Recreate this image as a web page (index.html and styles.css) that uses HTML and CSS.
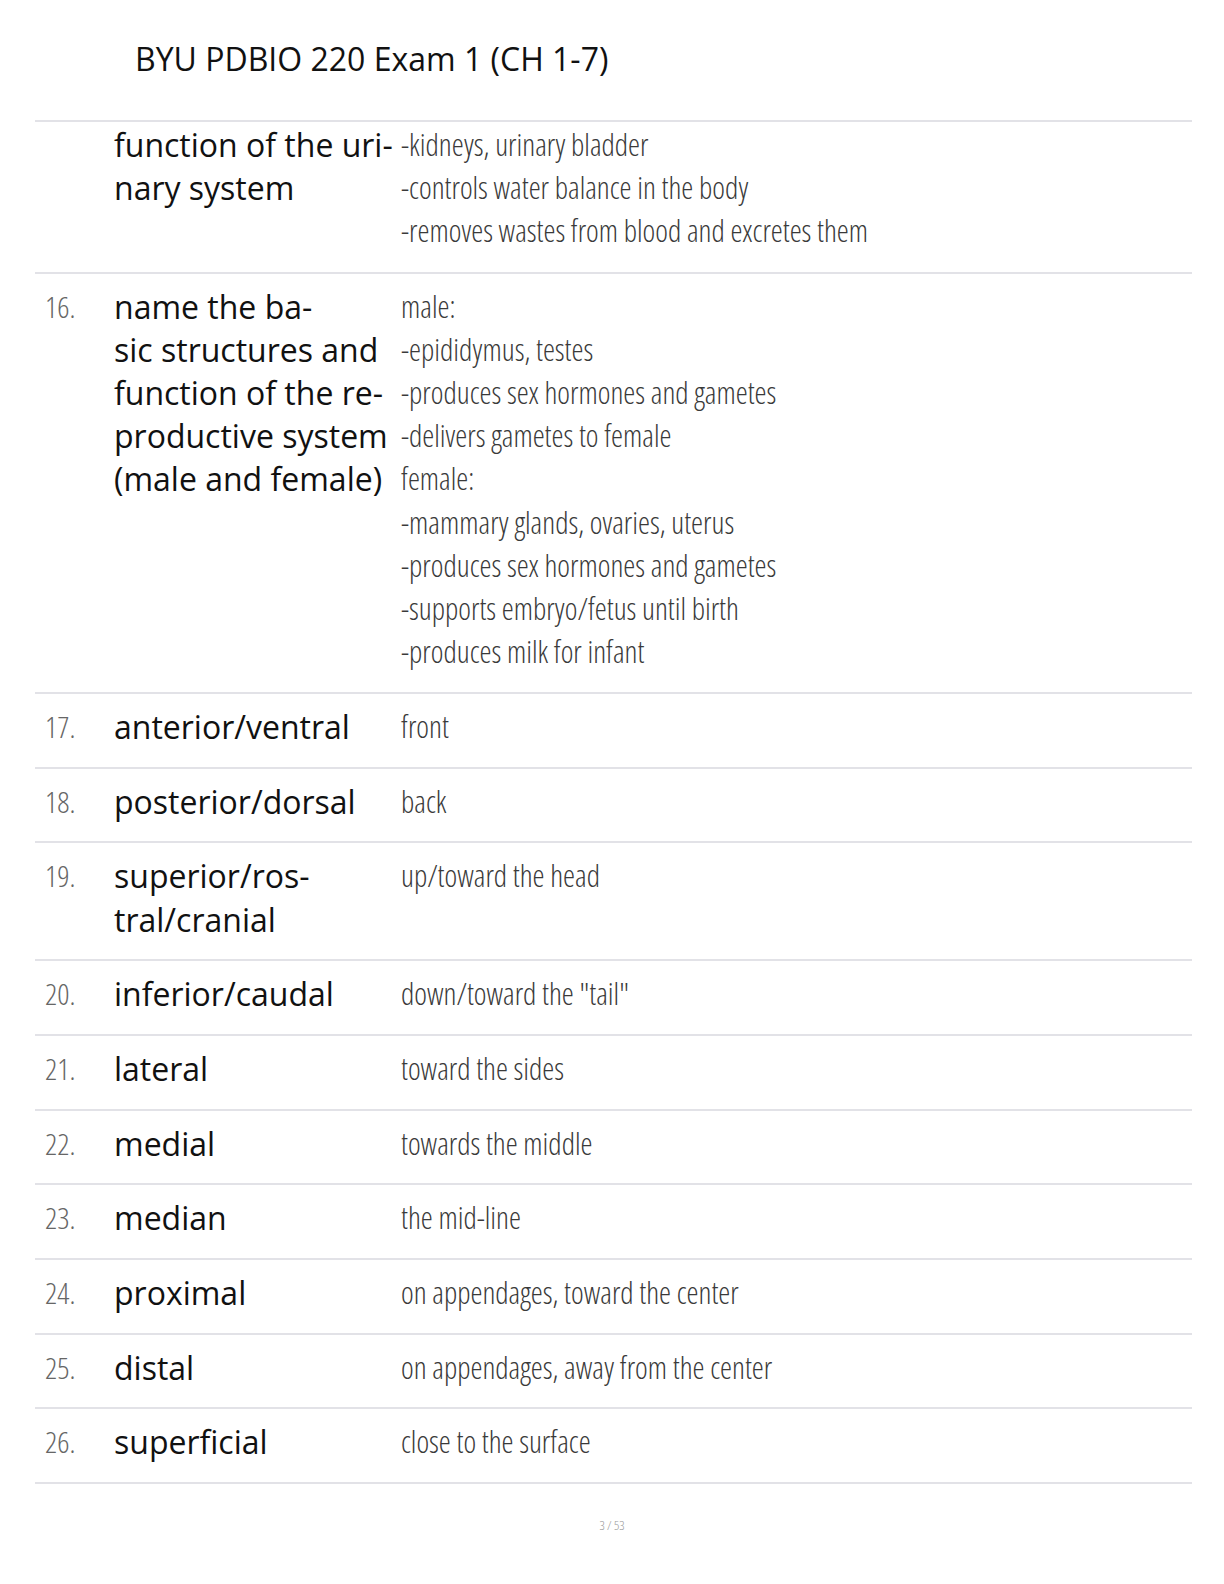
FILE: index.html
```html
<!DOCTYPE html>
<html lang="en">
<head>
    <meta charset="UTF-8">
    <meta name="viewport" content="width=device-width, initial-scale=1.0">
    <title>BYU PDBIO 220 Exam 1 (CH 1-7)</title>
    <link rel="stylesheet" href="styles.css">
</head>
<body>
<h1 class="title">BYU PDBIO 220 Exam 1 (CH 1-7)</h1>

<div class="cards">
    <div class="card card-cont">
        <div class="num"></div>
        <div class="term">function of the uri-<br>nary system</div>
        <div class="def">-kidneys, urinary bladder<br>-controls water balance in the body<br>-removes wastes from blood and excretes them</div>
    </div>
    <div class="card">
        <div class="num">16.</div>
        <div class="term">name the ba-<br>sic structures and<br>function of the re-<br>productive system<br>(male and female)</div>
        <div class="def">male:<br>-epididymus, testes<br>-produces sex hormones and gametes<br>-delivers gametes to female<br>female:<br>-mammary glands, ovaries, uterus<br>-produces sex hormones and gametes<br>-supports embryo/fetus until birth<br>-produces milk for infant</div>
    </div>
    <div class="card">
        <div class="num">17.</div>
        <div class="term">anterior/ventral</div>
        <div class="def">front</div>
    </div>
    <div class="card">
        <div class="num">18.</div>
        <div class="term">posterior/dorsal</div>
        <div class="def">back</div>
    </div>
    <div class="card">
        <div class="num">19.</div>
        <div class="term">superior/ros-<br>tral/cranial</div>
        <div class="def">up/toward the head</div>
    </div>
    <div class="card">
        <div class="num">20.</div>
        <div class="term">inferior/caudal</div>
        <div class="def">down/toward the "tail"</div>
    </div>
    <div class="card">
        <div class="num">21.</div>
        <div class="term">lateral</div>
        <div class="def">toward the sides</div>
    </div>
    <div class="card">
        <div class="num">22.</div>
        <div class="term">medial</div>
        <div class="def">towards the middle</div>
    </div>
    <div class="card">
        <div class="num">23.</div>
        <div class="term">median</div>
        <div class="def">the mid-line</div>
    </div>
    <div class="card">
        <div class="num">24.</div>
        <div class="term">proximal</div>
        <div class="def">on appendages, toward the center</div>
    </div>
    <div class="card">
        <div class="num">25.</div>
        <div class="term">distal</div>
        <div class="def">on appendages, away from the center</div>
    </div>
    <div class="card">
        <div class="num">26.</div>
        <div class="term">superficial</div>
        <div class="def">close to the surface</div>
    </div>
</div>

<div class="page-num">3 / 53</div>
</body>
</html>
```

FILE: styles.css
```css
body {
    margin: 0;
    background: #fff;
    color: #111;
    font-family: "Open Sans", "Noto Sans", sans-serif;
}
.title {
    margin: 0;
    padding: 39px 0 0 135px;
    font-size: 32px;
    font-weight: 400;
    line-height: 40px;
    height: 81px;
    color: #111;
}
.cards {
    margin: 0 32px 0 35px;
    border-top: 2px solid #e2e2e7;
}
.card {
    display: flex;
    padding: 11px 0 18.5px;
    border-bottom: 2px solid #e2e2e7;
    line-height: 43.2px;
}
.card-cont {
    padding-top: 1px;
    padding-bottom: 19px;
}
.num {
    width: 69px;
    padding-left: 10px;
    flex-shrink: 0;
    font-size: 30px;
    font-weight: 300;
    font-stretch: 75%;
    color: #666;
}
.term {
    width: 287px;
    flex-shrink: 0;
    font-size: 32px;
    color: #111;
}
.def {
    font-size: 30.3px;
    font-weight: 300;
    font-stretch: 75%;
    color: #3a3a3a;
}
.page-num {
    text-align: center;
    padding-top: 32px;
    font-size: 13px;
    font-weight: 300;
    font-stretch: 75%;
    color: #999;
}
```
